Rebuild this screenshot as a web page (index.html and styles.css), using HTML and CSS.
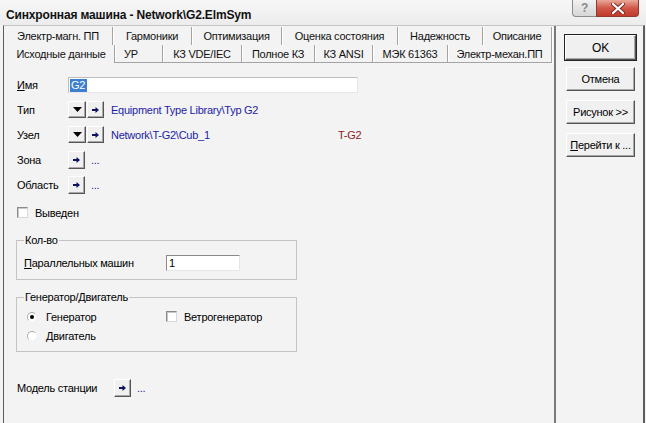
FILE: index.html
```html
<!DOCTYPE html>
<html lang="ru">
<head>
<meta charset="utf-8">
<title>Синхронная машина</title>
<link rel="stylesheet" href="styles.css">
</head>
<body>
<div class="window">
  <div class="titlebar">
    <span class="title">Синхронная машина - Network\G2.ElmSym</span>
    <div class="caption-btns">
      <span class="cb help">?</span>
      <span class="cb close"><svg width="14" height="11" viewBox="0 0 14 11"><path d="M2 1 L12 10 M12 1 L2 10" stroke="#7a2a20" stroke-width="4" stroke-linecap="round"/><path d="M2 1 L12 10 M12 1 L2 10" stroke="#ffffff" stroke-width="2.2" stroke-linecap="round"/></svg></span>
    </div>
  </div>
  <div class="frame">
    <div class="tabcol">
      <div class="tabrow row1">
        <span class="tab">Электр-магн. ПП</span>
        <span class="tab">Гармоники</span>
        <span class="tab">Оптимизация</span>
        <span class="tab">Оценка состояния</span>
        <span class="tab">Надежность</span>
        <span class="tab">Описание</span>
      </div>
      <div class="tabrow row2">
        <span class="tab selected">Исходные данные</span>
        <span class="tab ur">УР</span>
        <span class="tab">КЗ VDE/IEC</span>
        <span class="tab">Полное КЗ</span>
        <span class="tab">КЗ ANSI</span>
        <span class="tab">МЭК 61363</span>
        <span class="tab">Электр-механ.ПП</span>
      </div>
      <div class="panel">
        <div class="row">
          <span class="lbl"><u>И</u>мя</span>
          <span class="namebox"><span class="sel">G2</span></span>
        </div>
        <div class="row">
          <span class="lbl">Тип</span>
          <span class="sq drop"><svg width="9" height="5" viewBox="0 0 9 5"><path d="M0 0 H9 L4.5 5 Z" fill="#000"/></svg></span>
          <span class="sq arr"><svg width="7" height="6" viewBox="0 0 7 6"><path d="M0 2 H3.5 V0 L7 3 L3.5 6 V4 H0 Z" fill="#101060"/></svg></span>
          <span class="link">Equipment Type Library\Typ G2</span>
        </div>
        <div class="row">
          <span class="lbl">Узел</span>
          <span class="sq drop"><svg width="9" height="5" viewBox="0 0 9 5"><path d="M0 0 H9 L4.5 5 Z" fill="#000"/></svg></span>
          <span class="sq arr"><svg width="7" height="6" viewBox="0 0 7 6"><path d="M0 2 H3.5 V0 L7 3 L3.5 6 V4 H0 Z" fill="#101060"/></svg></span>
          <span class="link node">Network\T-G2\Cub_1</span>
          <span class="red">T-G2</span>
        </div>
        <div class="row">
          <span class="lbl">Зона</span>
          <span class="sq arr single"><svg width="7" height="6" viewBox="0 0 7 6"><path d="M0 2 H3.5 V0 L7 3 L3.5 6 V4 H0 Z" fill="#101060"/></svg></span>
          <span class="dots">...</span>
        </div>
        <div class="row">
          <span class="lbl">Область</span>
          <span class="sq arr single"><svg width="7" height="6" viewBox="0 0 7 6"><path d="M0 2 H3.5 V0 L7 3 L3.5 6 V4 H0 Z" fill="#101060"/></svg></span>
          <span class="dots">...</span>
        </div>
        <div class="row chkrow">
          <span class="chk"></span>
          <span class="chklbl">Выведен</span>
        </div>
        <fieldset class="group g1">
          <legend>Кол-во</legend>
          <div class="grow">
            <span class="glbl"><u>П</u>араллельных машин</span>
            <span class="numbox">1</span>
          </div>
        </fieldset>
        <fieldset class="group g2">
          <legend>Генератор/Двигатель</legend>
          <div class="grow2">
            <span class="radiocell"><span class="radio on"></span><span>Генератор</span></span>
            <span class="chk"></span><span class="chklbl">Ветрогенератор</span>
          </div>
          <div class="grow2">
            <span class="radiocell"><span class="radio"></span><span>Двигатель</span></span>
          </div>
        </fieldset>
        <div class="row model">
          <span class="lbl wide">Модель станции</span>
          <span class="sq arr single"><svg width="7" height="6" viewBox="0 0 7 6"><path d="M0 2 H3.5 V0 L7 3 L3.5 6 V4 H0 Z" fill="#101060"/></svg></span>
          <span class="dots">...</span>
        </div>
      </div>
    </div>
    <div class="btncol">
      <span class="btn ok"><span class="inner">OK</span></span>
      <span class="btn">Отмена</span>
      <span class="btn">Рисунок &gt;&gt;</span>
      <span class="btn"><span><u>П</u>ерейти к ...</span></span>
    </div>
  </div>
</div>
</body>
</html>
```
FILE: styles.css
```css
* { box-sizing: border-box; }
html, body { margin: 0; padding: 0; }
body {
  background: #f3f3f3;
  font-family: "Liberation Sans", Arial, sans-serif;
  font-size: 11px;
  letter-spacing: -0.25px;
  color: #000;
}
.window { width: 646px; height: 423px; overflow: hidden; }

.titlebar {
  height: 25px;
  display: flex;
  align-items: flex-start;
  background: linear-gradient(#f7f7f7, #ececec);
  padding: 0 7px 0 6px;
}
.title {
  font-weight: bold;
  font-size: 12px;
  line-height: 14px;
  padding-top: 8px;
  letter-spacing: -0.15px;
  color: #111;
}
.caption-btns { margin-left: auto; display: flex; }
.cb {
  height: 17px;
  display: flex;
  align-items: center;
  justify-content: center;
  border: 1px solid #8c8c8c;
  border-top: none;
}
.help {
  width: 24px;
  border-radius: 0 0 0 4px;
  background: linear-gradient(#f2f2f2, #d6d6d6);
  color: #8a8a8a;
  font-weight: bold;
  font-size: 12px;
  border-right: none;
}
.close {
  width: 43px;
  border-radius: 0 0 4px 0;
  border-color: #8e3a30;
  background: linear-gradient(#e9a99a, #d0584a 50%, #c13a2a);
}

.frame {
  display: flex;
  height: 398px;
  margin: 0 1px 0 3px;
  border-left: 1px solid #5c5c5c;
  border-right: 2px solid #5c5c5c;
  border-top: 1px solid #c4c4c4;
}
.tabcol {
  width: 552px;
  border-right: 2px solid #7a7a7a;
  padding-top: 1px;
  display: flex;
  flex-direction: column;
}
.tabrow {
  display: flex;
  height: 18px;
  padding-left: 4px;
}
.tab {
  height: 18px;
  line-height: 18px;
  text-align: center;
  white-space: nowrap;
  border-right: 1px solid #a4a4a4;
  box-shadow: 1px 0 0 #ffffff;
  color: #111;
}
.row1 .tab:nth-child(1) { width: 105px; padding-right: 4px; }
.row1 .tab:nth-child(2) { width: 79px; }
.row1 .tab:nth-child(3) { width: 90px; }
.row1 .tab:nth-child(4) { width: 116px; }
.row1 .tab:nth-child(5) { width: 85px; }
.row1 .tab:nth-child(6) { width: 69px; }
.row2 .tab { border-bottom: 1px solid #a4a4a4; }
.row2 .tab:nth-child(1) { width: 107px; border-bottom: none; }
.row2 .tab:nth-child(2) { width: 48px; }
.row2 .tab:nth-child(3) { width: 79px; }
.row2 .tab:nth-child(4) { width: 73px; }
.row2 .tab:nth-child(5) { width: 58px; }
.row2 .tab:nth-child(6) { width: 75px; }
.row2 .tab:nth-child(7) { width: 104px; }
.row2 .ur { text-align: left; padding-left: 9px; }

.panel {
  flex: 1;
  padding: 9px 0 0 13px;
  display: flex;
  flex-direction: column;
}
.row {
  height: 25px;
  display: flex;
  align-items: center;
}
.lbl { width: 51px; }
.lbl.wide { width: 97px; }
.namebox {
  width: 290px;
  height: 16px;
  background: #fff;
  border: 1px solid #bdbdbd;
  border-right-color: #e6e6e6;
  border-bottom-color: #e6e6e6;
  padding: 1px 0 0 1px;
  display: flex;
}
.sel {
  background: #3d7fd1;
  color: #fff;
  height: 13px;
  line-height: 13px;
  padding: 0 2px 0 1px;
}
.sq {
  width: 18px;
  height: 17px;
  display: flex;
  align-items: center;
  justify-content: center;
  background: #f0f0f0;
  border-top: 1px solid #ffffff;
  border-left: 1px solid #ffffff;
  border-right: 1px solid #555;
  border-bottom: 1px solid #555;
  box-shadow: inset -1px -1px 0 #a8a8a8;
}
.sq.arr { width: 17px; margin-left: 1px; }
.sq.single { margin-left: 0; height: 18px; }
.link { color: #1c1ca6; margin-left: 7px; }
.link.node { width: 227px; }
.red { color: #8c1c1c; }
.dots { color: #1c1ca6; margin-left: 6px; }

.chkrow { margin-top: 3px; }
.chk {
  width: 11px;
  height: 11px;
  background: #fff;
  border: 1px solid #8a8a8a;
  border-right-color: #d8d8d8;
  border-bottom-color: #d8d8d8;
  box-shadow: inset 1px 1px 0 #c8c8c8;
}
.chklbl { margin-left: 7px; }

.group {
  margin: 9px 0 0 -1px;
  width: 281px;
  border: 1px solid #c4c4c4;
  padding: 8px 0 8px 7px;
  min-width: 0;
}
.group legend {
  padding: 0 1px;
  line-height: 13px;
}
.grow { display: flex; align-items: center; height: 16px; }
.glbl { width: 142px; }
.numbox {
  width: 74px;
  height: 16px;
  background: #fff;
  border: 1px solid #8a8a8a;
  border-right-color: #e6e6e6;
  border-bottom-color: #e6e6e6;
  padding-left: 2px;
  line-height: 14px;
}
.g2 { margin-top: 11px; padding: 3px 0 6px 7px; }
.grow2 { display: flex; align-items: center; height: 19px; }
.radiocell { width: 142px; display: flex; align-items: center; }
.radio {
  width: 10px;
  height: 10px;
  margin: 0 9px 0 3px;
  border-radius: 50%;
  border: 1px solid #b0b0b0;
  border-right-color: #f3f3f3;
  border-bottom-color: #f3f3f3;
  background: #fff;
  display: flex;
  align-items: center;
  justify-content: center;
}
.radio.on::after {
  content: "";
  width: 4px;
  height: 4px;
  border-radius: 50%;
  background: #000;
}
.model { margin-top: 24px; height: 24px; }

.btncol {
  flex: 1;
  display: flex;
  flex-direction: column;
  align-items: flex-start;
  padding-top: 8px;
}
.btn {
  margin: 9px 0 0 10px;
  width: 69px;
  height: 24px;
  display: flex;
  align-items: center;
  justify-content: center;
  background: #f0f0f0;
  border-top: 1px solid #ffffff;
  border-left: 1px solid #ffffff;
  border-right: 1px solid #555;
  border-bottom: 1px solid #555;
  box-shadow: inset -1px -1px 0 #a8a8a8;
  white-space: nowrap;
}
.btn.ok {
  margin: 0 0 0 8px;
  width: 73px;
  height: 27px;
  border: 1px solid #222;
  box-shadow: none;
  padding: 0;
  font-size: 12px;
}
.btn.ok .inner {
  width: 100%;
  height: 100%;
  display: flex;
  align-items: center;
  justify-content: center;
  border-top: 1px solid #fff;
  border-left: 1px solid #fff;
  border-right: 1px solid #555;
  border-bottom: 1px solid #555;
  box-shadow: inset -1px -1px 0 #a8a8a8;
}
.btncol .btn:nth-child(2) { margin-top: 6px; }
```
